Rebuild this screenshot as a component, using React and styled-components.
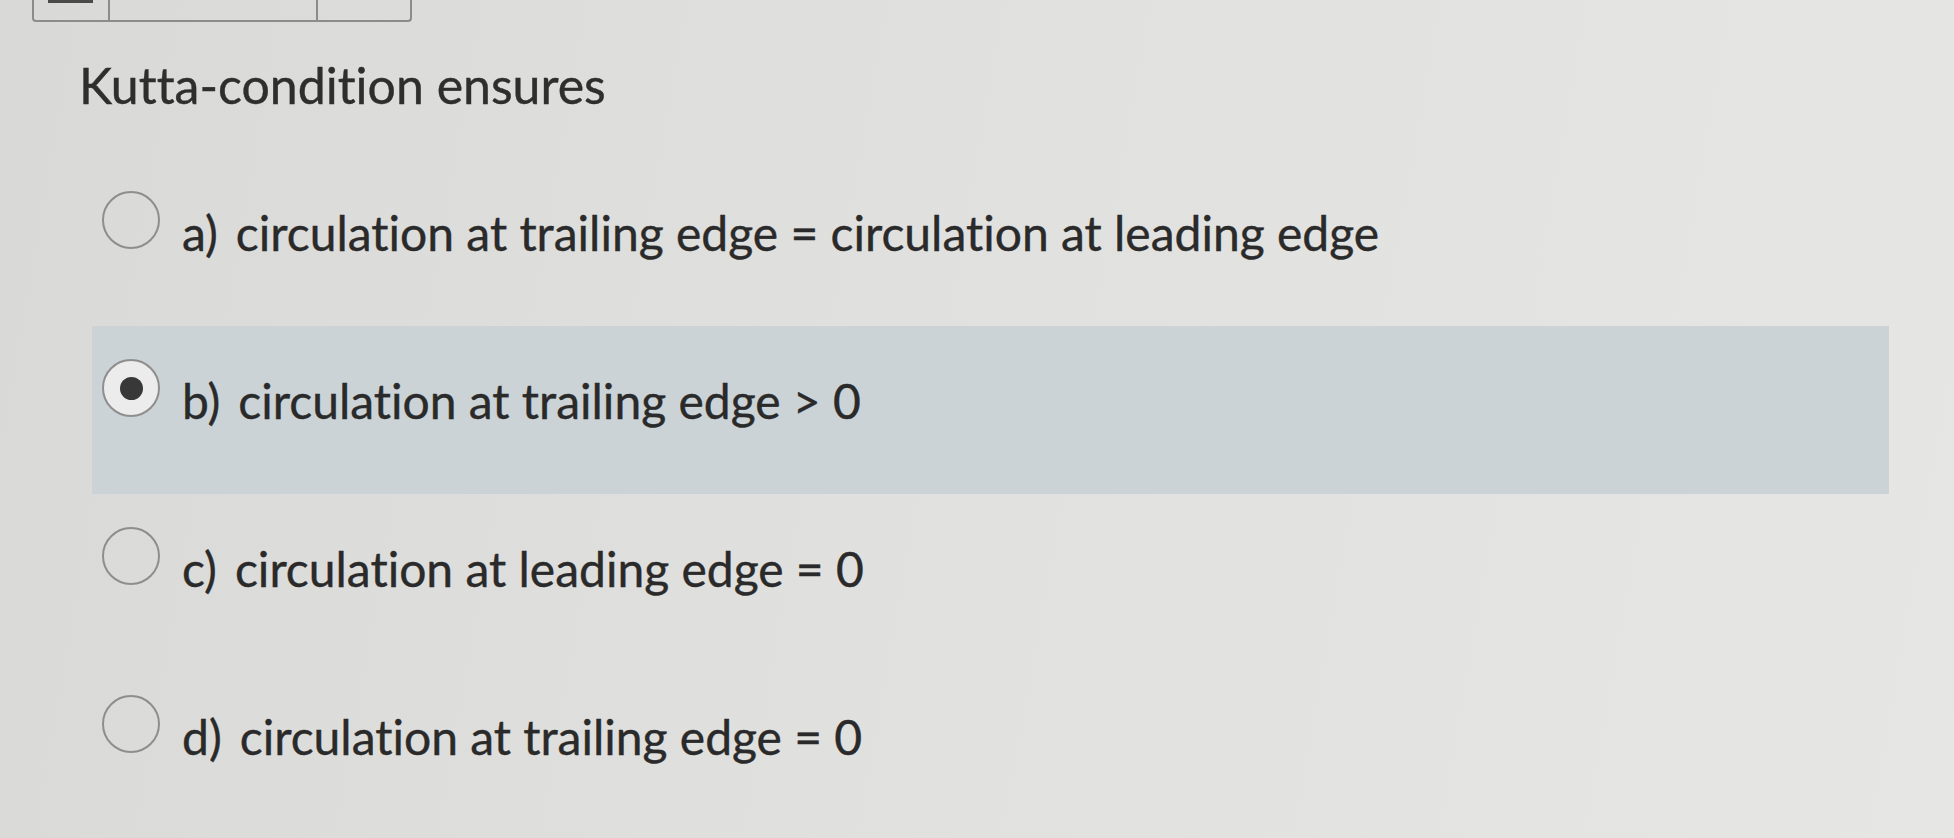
import React, { useState } from 'react'
import styled, { createGlobalStyle } from 'styled-components'

const GlobalStyle = createGlobalStyle`
  html, body {
    margin: 0;
    padding: 0;
    height: 100%;
  }
  body {
    background: linear-gradient(100deg, #d9d9d7 0%, #e0e0de 45%, #e6e6e4 100%);
    font-family: 'Lato', 'Noto Sans', sans-serif;
    font-variant-ligatures: none;
    color: #2b2b2b;
    overflow: hidden;
  }
`

const options = [
  { key: 'a', label: 'circulation at trailing edge = circulation at leading edge' },
  { key: 'b', label: 'circulation at trailing edge > 0' },
  { key: 'c', label: 'circulation at leading edge = 0' },
  { key: 'd', label: 'circulation at trailing edge = 0' },
]

function App() {
  const [answer, setAnswer] = useState('b')

  return (
    <Page>
      <GlobalStyle />
      <Toolbar>
        <ToolButton $width={74}>
          <Bar />
        </ToolButton>
        <ToolButton $width={206} />
        <ToolButton $width={92} />
      </Toolbar>
      <Question>Kutta-condition ensures</Question>
      <Options>
        {options.map(o => (
          <Option key={o.key} $selected={answer === o.key} onClick={() => setAnswer(o.key)}>
            <Radio $checked={answer === o.key} />
            <Label>
              <Letter>{o.key})</Letter>
              {o.label}
            </Label>
          </Option>
        ))}
      </Options>
    </Page>
  )
}

export default App

const Page = styled.div`
  width: 1954px;
  height: 838px;
  display: flex;
  flex-direction: column;
`

const Toolbar = styled.div`
  display: flex;
  margin-left: 32px;
  width: fit-content;
  height: 20px;
  border: 2px solid #8c8c8c;
  border-top: none;
  border-radius: 0 0 4px 4px;
`

const ToolButton = styled.div`
  width: ${p => p.$width}px;
  & + & {
    border-left: 2px solid #8c8c8c;
  }
`

const Bar = styled.div`
  margin-left: 14px;
  width: 45px;
  height: 3px;
  background: #4a4a4a;
`

const Question = styled.div`
  margin: 30px 0 0 79px;
  font-size: 50px;
  line-height: 66px;
  color: #2e2e2e;
  -webkit-text-stroke: 0.4px #2e2e2e;
`

const Options = styled.div`
  display: flex;
  flex-direction: column;
  margin: 40px 65px 0 92px;
`

const Option = styled.div`
  display: flex;
  align-items: center;
  gap: 22px;
  height: 168px;
  box-sizing: border-box;
  padding: 0 0 18px 10px;
  background: ${p => (p.$selected ? '#ccd3d7' : 'transparent')};
  cursor: pointer;
`

const Radio = styled.span`
  flex: none;
  width: 58px;
  height: 58px;
  margin-top: -26px;
  box-sizing: border-box;
  border-radius: 50%;
  border: 2px solid #8e8e8e;
  background: ${p => (p.$checked ? '#ececec' : 'transparent')};
  display: flex;
  align-items: center;
  justify-content: center;
  &::after {
    content: '';
    width: 23px;
    height: 23px;
    border-radius: 50%;
    background: #383838;
    display: ${p => (p.$checked ? 'block' : 'none')};
  }
`

const Label = styled.span`
  font-size: 48px;
  line-height: 58px;
  color: #2a2a2a;
  -webkit-text-stroke: 0.4px #2a2a2a;
`

const Letter = styled.span`
  margin-right: 18px;
`
